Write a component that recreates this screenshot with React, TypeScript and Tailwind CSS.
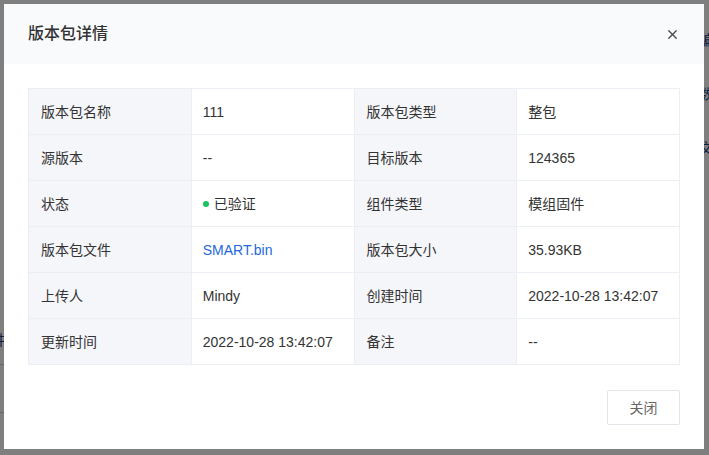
import { X } from "lucide-react";

type Cell = { label: string; value: React.ReactNode };

const rows: [Cell, Cell][] = [
  [
    { label: "版本包名称", value: "111" },
    { label: "版本包类型", value: "整包" },
  ],
  [
    { label: "源版本", value: "--" },
    { label: "目标版本", value: "124365" },
  ],
  [
    {
      label: "状态",
      value: (
        <span className="inline-flex items-center gap-[5px]">
          <span className="h-[6px] w-[6px] rounded-full bg-[#19c25f]" />
          已验证
        </span>
      ),
    },
    { label: "组件类型", value: "模组固件" },
  ],
  [
    {
      label: "版本包文件",
      value: <span className="text-[#2468e0]">SMART.bin</span>,
    },
    { label: "版本包大小", value: "35.93KB" },
  ],
  [
    { label: "上传人", value: "Mindy" },
    { label: "创建时间", value: "2022-10-28 13:42:07" },
  ],
  [
    { label: "更新时间", value: "2022-10-28 13:42:07" },
    { label: "备注", value: "--" },
  ],
];

export default function App() {
  return (
    <div
      className="relative h-[455px] w-[709px] overflow-hidden bg-white"
      style={{ fontFamily: '"Liberation Sans", "Noto Sans CJK SC", sans-serif' }}
    >
      {/* page behind the overlay */}
      <div className="absolute right-0 top-[30px] flex w-[12px] flex-col gap-[34px] text-sm text-[#1f3f7a]">
        <span className="pl-[2px]">编</span>
        <span className="pl-[2px]">数</span>
        <span className="pl-[2px]">文</span>
      </div>
      <div className="absolute left-0 top-[330px] text-sm text-[#1f3f7a]">
        <span className="-ml-[8px]">件</span>
      </div>
      <div className="absolute left-0 top-[364px] h-px w-[10px] bg-[#d0d0d0]" />
      <div className="absolute left-0 top-[412px] h-px w-[10px] bg-[#d0d0d0]" />

      <div className="absolute inset-0 bg-black/50 pl-1 pt-1">
        <div className="flex h-[445px] w-[700px] flex-col bg-white">
          <div className="flex h-[60px] items-center justify-between bg-[#f9fafc] px-6">
            <h2 className="text-base font-medium text-[#333]">版本包详情</h2>
            <X className="h-[15px] w-[15px] text-[#444]" strokeWidth={2} />
          </div>

          <div className="px-6 pt-6">
            <div className="grid grid-cols-4 border-l border-t border-[#ebeef5] text-sm text-[#333]">
              {rows.flatMap((pair, i) =>
                pair.flatMap((c, j) => [
                  <div
                    key={`l${i}${j}`}
                    className="flex h-[46px] items-center border-b border-r border-[#ebeef5] bg-[#f5f6fa] px-3"
                  >
                    {c.label}
                  </div>,
                  <div
                    key={`v${i}${j}`}
                    className="flex h-[46px] items-center border-b border-r border-[#ebeef5] bg-white px-[11px]"
                  >
                    {c.value}
                  </div>,
                ]),
              )}
            </div>
          </div>

          <div className="flex justify-end px-6 pt-[25px]">
            <button
              type="button"
              className="h-[35px] w-[73px] rounded-[2px] border border-[#e3e5ea] bg-white text-sm text-[#666]"
            >
              关闭
            </button>
          </div>
        </div>
      </div>
    </div>
  );
}
